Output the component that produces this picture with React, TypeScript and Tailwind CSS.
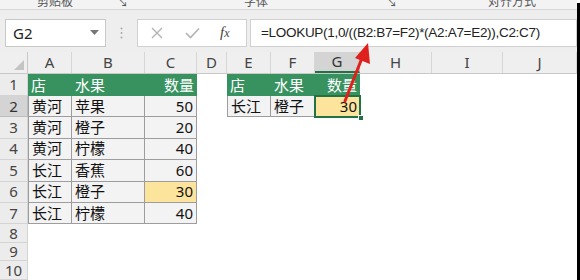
import React from "react";

const FONT = '"Noto Sans", "Noto Sans CJK SC", sans-serif';

const cols = [
  { k: "A", w: 44 },
  { k: "B", w: 73 },
  { k: "C", w: 52 },
  { k: "D", w: 30 },
  { k: "E", w: 44 },
  { k: "F", w: 44 },
  { k: "G", w: 45 },
  { k: "H", w: 72 },
  { k: "I", w: 71 },
  { k: "J", w: 74 },
];

type Cell = { t?: string; kind?: "head" | "data" | "yellow" | "sel"; right?: boolean };

const rowsData: Cell[][] = [
  [
    { t: "店", kind: "head" },
    { t: "水果", kind: "head" },
    { t: "数量", kind: "head", right: true },
    {},
    { t: "店", kind: "head" },
    { t: "水果", kind: "head" },
    { t: "数量", kind: "head", right: true },
  ],
  [
    { t: "黄河", kind: "data" },
    { t: "苹果", kind: "data" },
    { t: "50", kind: "data", right: true },
    {},
    { t: "长江", kind: "data" },
    { t: "橙子", kind: "data" },
    { t: "30", kind: "sel", right: true },
  ],
  [
    { t: "黄河", kind: "data" },
    { t: "橙子", kind: "data" },
    { t: "20", kind: "data", right: true },
  ],
  [
    { t: "黄河", kind: "data" },
    { t: "柠檬", kind: "data" },
    { t: "40", kind: "data", right: true },
  ],
  [
    { t: "长江", kind: "data" },
    { t: "香蕉", kind: "data" },
    { t: "60", kind: "data", right: true },
  ],
  [
    { t: "长江", kind: "data" },
    { t: "橙子", kind: "data" },
    { t: "30", kind: "yellow", right: true },
  ],
  [
    { t: "长江", kind: "data" },
    { t: "柠檬", kind: "data" },
    { t: "40", kind: "data", right: true },
  ],
];

function CellView({ c, w, first }: { c: Cell; w: number; first: boolean }) {
  const base = "relative h-full flex items-center px-[3px] text-[15px] leading-none shrink-0";
  const align = c.right ? " justify-end" : " justify-start";
  let cls = base + align;
  if (c.kind === "head") cls += " bg-[#38925f] text-white";
  else if (c.kind === "data")
    cls += " bg-[#f3f3f3] text-[#111] border-r border-b border-[#9d9d9d]" + (first ? " border-l" : "");
  else if (c.kind === "yellow")
    cls += " bg-[#fde49c] text-[#111] border-r border-b border-[#9d9d9d]";
  else if (c.kind === "sel") cls += " bg-[#fde49c] text-[#111]";
  return (
    <div className={cls} style={{ width: w }}>
      {c.t}
      {c.kind === "sel" && (
        <>
          <div className="absolute inset-[-1px] border-2 border-[#217346]" />
          <div className="absolute right-[-4px] bottom-[-4px] w-[6px] h-[6px] bg-[#217346] border border-white" />
        </>
      )}
    </div>
  );
}

export default function App() {
  return (
    <div
      className="relative w-[580px] h-[280px] overflow-hidden bg-white flex"
      style={{ fontFamily: FONT }}
    >
      <div className="w-[577px] flex flex-col shrink-0">
        {/* ribbon bottom */}
        <div className="h-[10px] bg-[#f3f3f3] border-b border-[#d6d6d6] overflow-hidden flex items-end text-[12px] text-[#555] leading-none">
          <span className="ml-[37px] mb-[1px]">剪贴板</span>
          <span className="ml-[44px] mb-[1px] text-[11px]">↘</span>
          <span className="ml-[116px] mb-[1px]">字体</span>
          <span className="ml-[118px] mb-[1px] text-[11px]">↘</span>
          <span className="ml-[91px] mb-[1px]">对齐方式</span>
        </div>
        {/* formula bar */}
        <div className="h-[43px] bg-[#eeeeee] flex items-start pt-[9px]">
          <div className="ml-[5px] w-[101px] h-[28px] bg-white border border-[#c8c8c8] flex items-center justify-between pl-[7px] pr-[6px]">
            <span className="text-[15px] text-[#222]">G2</span>
            <svg width="9" height="6" viewBox="0 0 9 6">
              <path d="M0 0 L9 0 L4.5 5 Z" fill="#777" />
            </svg>
          </div>
          <div className="w-[31px] h-[28px] flex items-center justify-center">
            <svg width="3" height="12" viewBox="0 0 3 12">
              <circle cx="1.5" cy="1.5" r="1" fill="#aaa" />
              <circle cx="1.5" cy="6" r="1" fill="#aaa" />
              <circle cx="1.5" cy="10.5" r="1" fill="#aaa" />
            </svg>
          </div>
          <div className="w-[110px] h-[28px] bg-white border border-[#d0d0d0] flex items-center">
            <svg className="ml-[13px]" width="12" height="12" viewBox="0 0 12 12">
              <path d="M1 1 L11 11 M11 1 L1 11" stroke="#b3b3b3" strokeWidth="1.4" />
            </svg>
            <svg className="ml-[22px]" width="15" height="12" viewBox="0 0 15 12">
              <path d="M1 6 L5.5 10.5 L14 1.5" stroke="#b3b3b3" strokeWidth="1.6" fill="none" />
            </svg>
            <span
              className="ml-[20px] text-[15px] italic text-[#444] leading-none"
              style={{ fontFamily: '"Liberation Serif", serif' }}
            >
              f<span className="text-[12px]">x</span>
            </span>
          </div>
          <div className="ml-[3px] flex-1 h-[28px] bg-white border border-[#d0d0d0] flex items-center pl-[10px]">
            <span
              className="text-[13.5px] text-[#222] tracking-[-0.3px]"
              style={{ fontFamily: '"Liberation Sans", Arial, sans-serif' }}
            >
              =LOOKUP(1,0/((B2:B7=F2)*(A2:A7=E2)),C2:C7)
            </span>
          </div>
        </div>
        {/* column headers */}
        <div className="h-[23px] flex bg-[#efefef] border-b border-[#c9c9c9]">
          <div className="w-[28px] h-full flex items-end justify-end pr-[3px] pb-[3px] shrink-0 border-r border-[#c9c9c9]">
            <svg width="10" height="10" viewBox="0 0 10 10">
              <path d="M10 0 L10 10 L0 10 Z" fill="#c4c4c4" />
            </svg>
          </div>
          {cols.map((c) => (
            <div
              key={c.k}
              className={
                "h-full flex items-center justify-center text-[15px] leading-none shrink-0 border-r " +
                (c.k === "G"
                  ? "bg-[#d4d4d4] text-[#333] border-[#bdbdbd] border-b-2 border-b-[#217346]"
                  : "text-[#444] border-[#d6d6d6]")
              }
              style={{ width: c.w }}
            >
              {c.k}
            </div>
          ))}
        </div>
        {/* data rows */}
        {rowsData.map((row, ri) => (
          <div key={ri} className="h-[22px] flex">
            <div
              className={
                "w-[28px] h-full flex items-center justify-center text-[15px] leading-none shrink-0 border-r border-b " +
                (ri === 1 ? "bg-[#d4d4d4] text-[#333] border-[#bdbdbd]" : "bg-[#ececec] text-[#444] border-[#d4d4d4]")
              }
            >
              {ri + 1}
            </div>
            {cols.map((c, ci) => (
              <CellView key={c.k} c={row[ci] ?? {}} w={c.w} first={ci === 0 || ci === 4} />
            ))}
          </div>
        ))}
        {[8, 9, 10].map((n) => (
          <div key={n} className="h-[19px] flex">
            <div className="w-[28px] h-full flex items-center justify-center text-[15px] leading-none shrink-0 bg-[#ececec] text-[#444] border-r border-b border-[#d4d4d4]">
              {n}
            </div>
          </div>
        ))}
      </div>
      <div className="flex-1 bg-black mt-[3px]" />
      {/* red arrow */}
      <svg className="absolute left-0 top-0 pointer-events-none" width="580" height="280" viewBox="0 0 580 280">
        <line x1="345" y1="101" x2="362" y2="58" stroke="#e0201c" strokeWidth="3" strokeLinecap="round" />
        <path d="M368 43 L370 64 L355 58 Z" fill="#e0201c" />
      </svg>
    </div>
  );
}
